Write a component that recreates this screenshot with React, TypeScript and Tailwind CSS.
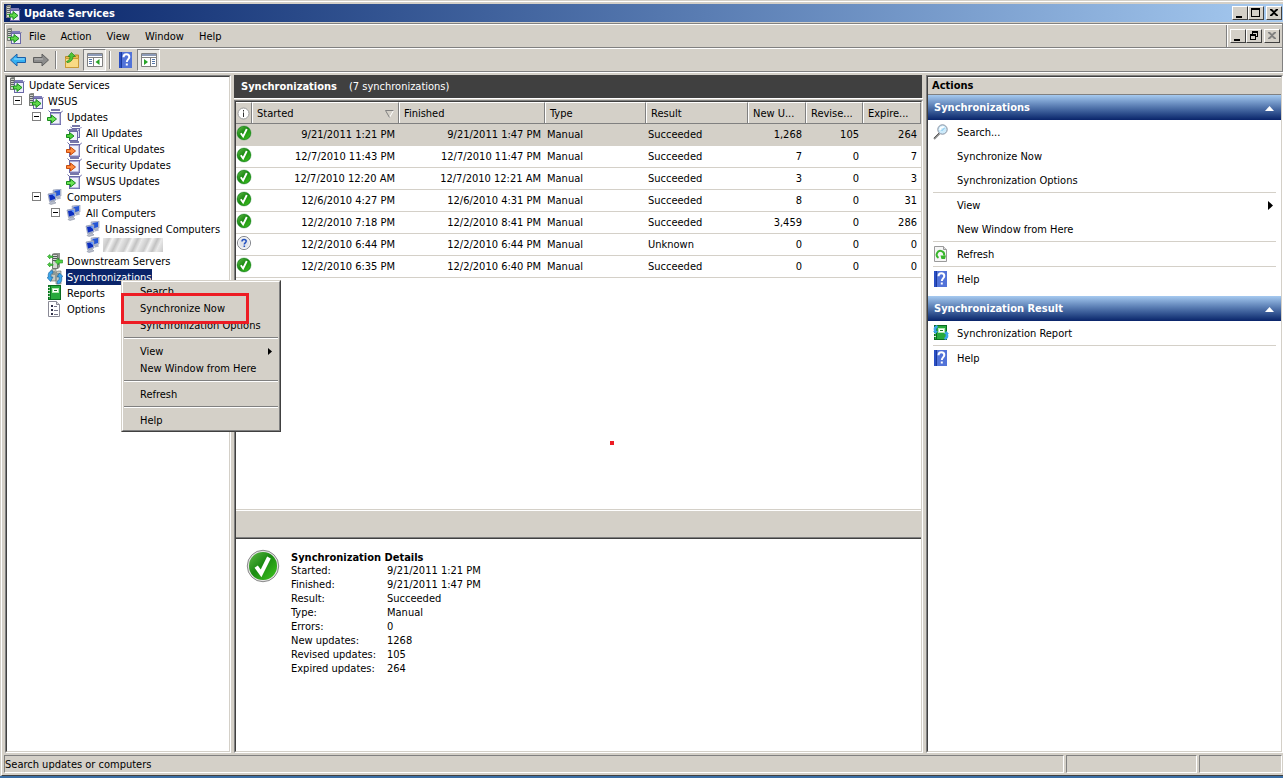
import clsx from "clsx";
import type { ReactNode } from "react";

const ARROW = "M0.5 8.500h4v-2.500l5 4-5 4v-2.500h-4z";

interface IconProps {
  children: ReactNode;
  size?: number;
}
const Icon = ({ children, size = 16 }: IconProps) => (
  <svg
    width={size}
    height={size}
    viewBox="0 0 16 16"
    className="block shrink-0"
    aria-hidden="true"
  >
    {children}
  </svg>
);

const ServerIcon = () => (
  <Icon>
    <path d="M1 1l2-1h3v13H1z" fill="#8d908b" />
    <path d="M1.500 1.500h4v11h-4z" fill="#d0d3cd" stroke="#777a76" />
    <path d="M2 3.500h3M2 5.500h3M2 7.500h3" stroke="#5b6064" />
    <rect x="2" y="9" width="2" height="1" fill="#3aa53a" />
    <path d="M4.500 4l1.500 1.500h8l1.500-1.500" fill="none" stroke="#6a69a8" />
    <rect x="6" y="3" width="8" height="2" fill="#7d7cb8" />
    <rect x="5.500" y="5.500" width="9" height="10" fill="#eeeefc" stroke="#6a69a8" />
    <path
      d="M4.500 9h3.500V6.500l5 4-5 4V12H4.500z"
      fill="#5fd84a"
      stroke="#188a1c"
    />
  </Icon>
);

const BoxIcon = ({ color = "green" }: { color?: "green" | "orange" }) => (
  <Icon>
    <rect x="4" y="0" width="9" height="2" fill="#7877a9" />
    <path d="M1.500 1.500L4 4h9.500l2.500-2.500" fill="none" stroke="#6a69a8" />
    <rect x="3.500" y="3.500" width="10" height="12" fill="#f1f1fb" stroke="#6a69a8" />
    <path d="M4 4.500h9" stroke="#a9a8d4" />
    <path d="M13 5v10H4" fill="none" stroke="#8f8ec2" />
    <path
      d={ARROW}
      fill={color === "green" ? "#6be254" : "#ff8a3c"}
      stroke={color === "green" ? "#188a1c" : "#c44a10"}
    />
  </Icon>
);

const StackIcon = () => (
  <Icon>
    <rect x="6" y="0" width="8" height="2" fill="#7877a9" />
    <path d="M4.500 2l2 1.500h7.500L15.500 2" fill="none" stroke="#6a69a8" />
    <rect x="6.500" y="3.500" width="7" height="9" fill="#dedef2" stroke="#6a69a8" />
    <path d="M1.500 4.500l2 2h8l1.500-2" fill="none" stroke="#6a69a8" />
    <rect x="3" y="4" width="8" height="2" fill="#7877a9" />
    <rect x="3.500" y="6.500" width="8" height="9" fill="#f1f1fb" stroke="#6a69a8" />
    <path
      d="M.5 9.500h3V7.500l4.500 3.500-4.500 3.500v-2h-3z"
      fill="#4ed03a"
      stroke="#188a1c"
    />
  </Icon>
);

const ComputersIcon = () => (
  <Icon>
    <path d="M6 1l8-1v7l-7 2z" fill="#b9c3dc" stroke="#8a93ad" strokeWidth=".6" />
    <path d="M7.500 2l5.500-1v5l-5 1.500z" fill="#2456d8" />
    <path d="M10 8l3-.5 1 2-4 1z" fill="#aab2c6" />
    <path d="M1 5l8-1.500V11l-6.500 1.500z" fill="#a9b6d8" stroke="#78839f" strokeWidth=".6" />
    <path d="M2 6l6-1v5l-5 1.500z" fill="#0d2fc0" />
    <path d="M5 5.500L8 5v3z" fill="#6ea4ff" />
    <path d="M4 12.500l3-.5 2 2-5 1.500-2-1z" fill="#b7bdcc" stroke="#7d8496" strokeWidth=".5" />
  </Icon>
);

const DownstreamIcon = () => (
  <Icon>
    <path d="M5 1l2-1h6v14l-2 2H5z" fill="#8f938e" />
    <path d="M5.500 1.500h5v14h-5z" fill="#d5d8d2" stroke="#737872" />
    <path d="M6 3.500h4M6 5.500h4M6 7.500h4" stroke="#50585a" />
    <path
      d="M.5 3.500l2.500-2v1.500h3v1.500H3V6zM.5 11.500l2.500-2V11h3v1.500H3V14zM8 8.500l3.500-3.500v2H15.500v3h-4v2z"
      fill="#55cf43"
      stroke="#1c8d22"
      strokeWidth=".6"
    />
  </Icon>
);

const SyncArrows = () => (
  <>
    <path
      d="M5.500 1.500C2 2 .5 5 1.500 8L0 8.500l3.500 4L6 8l-2 .2C3.500 6 4 4.500 6 4z"
      fill="#3aa5ea"
      stroke="#16609c"
      strokeWidth=".6"
    />
    <path
      d="M10.500 15c3.500-.5 5-3.500 4-7l1.500-.5L12.500 4 10 8l2-.2c.5 2.200 0 3.900-2 4.500z"
      fill="#3aa5ea"
      stroke="#16609c"
      strokeWidth=".6"
    />
  </>
);

const SyncIcon = () => (
  <Icon>
    <path d="M4 1l2-1h3v12H4zM9 3l2-1h3v13H9z" fill="#c5cac3" stroke="#656b66" strokeWidth=".6" />
    <path d="M5 3h3M5 5h3M10 5h3M10 7h3" stroke="#566" />
    <SyncArrows />
  </Icon>
);

const ReportIcon = ({ sync = false }: { sync?: boolean }) => (
  <Icon>
    <rect x="1.500" y=".5" width="12" height="14" fill="#27a93c" stroke="#0b6b20" />
    <path d="M1 2.500h2M1 5.500h2M1 8.500h2M1 11.500h2" stroke="#d8e8d8" />
    <path d="M3.500 1v13" stroke="#0b6b20" />
    <rect x="5.500" y="3.500" width="6" height="4" fill="#fff" stroke="#b0e8b0" />
    <rect x="7" y="5" width="3" height="1" fill="#1c7c2c" />
    {sync && (
      <>
        <path d="M4 0C1 1 0 3 1 6H0l2.500 3L5 6H3.500C3 4 3.500 3 5 2z" fill="#3aa5ea" />
        <path d="M12 15c3-1 4-3 3-6h1l-2.500-3L11 9h1.500c.5 2 0 3-1.500 4z" fill="#3aa5ea" />
      </>
    )}
  </Icon>
);

const OptionsIcon = () => (
  <Icon>
    <path d="M1.500.5h8l3 3v12h-11z" fill="#fff" stroke="#8a8a96" />
    <path d="M9.500.5v3h3" fill="#ddd" stroke="#8a8a96" />
    <path d="M4 5h2M4 9h2M4 13h2" stroke="#33334a" strokeWidth="2" />
    <path d="M7 5.500h3M7 9.500h4M7 13.500h4" stroke="#77778a" />
  </Icon>
);

const HelpIcon = () => (
  <Icon>
    <path d="M1 0h13v16H1z" fill="#2a4fc4" />
    <path d="M4 0h10v16H4z" fill="#5273d8" />
    <path d="M3 0h1v16H3z" fill="#1c3a9c" />
    <path
      d="M5.500 5.200C5.500 3 6.700 2.300 8.400 2.300c1.800 0 2.900 1 2.900 2.700 0 2.300-2.500 2.500-2.500 5M8.800 11.500v2"
      fill="none"
      stroke="#fff"
      strokeWidth="2"
    />
  </Icon>
);

const RefreshIcon = () => (
  <Icon>
    <path d="M1.500.5h9l3 3v12h-12z" fill="#f6f6f6" stroke="#9a9a9a" />
    <path d="M10.500.5v3h3" fill="#ddd" stroke="#9a9a9a" />
    <path
      d="M5.500 11.800A3.700 3.700 0 1 1 11 9.500"
      fill="none"
      stroke="#38b52c"
      strokeWidth="2"
    />
    <path d="M7.500 9.500h5.500l-1 3.500h-3.500z" fill="#38b52c" />
  </Icon>
);

const SearchIcon = () => (
  <Icon>
    <path d="M1 15l5.500-5.500" stroke="#8c8c8c" strokeWidth="2" />
    <path d="M1 14l5-5" stroke="#444" strokeWidth=".7" />
    <circle cx="9.500" cy="5.500" r="4.700" fill="#cdeafa" stroke="#8790a0" />
    <path d="M7 6c0-2 1.500-3.500 4-3" fill="none" stroke="#fff" strokeWidth="1.500" />
    <path d="M8.500 7l3-3" stroke="#7cc4ec" />
  </Icon>
);

const OkIcon = ({ big = false }: { big?: boolean }) => (
  <Icon size={big ? 34 : 16}>
    <defs>
      <linearGradient id="ok" x1="0" y1="0" x2="1" y2="1">
        <stop offset="0" stopColor="#63bb4a" />
        <stop offset=".45" stopColor="#1b8a12" />
        <stop offset="1" stopColor="#3fc51f" />
      </linearGradient>
    </defs>
    <circle cx="8" cy="8" r={big ? 7.400 : 7.100} fill={big ? "#e4e4e4" : "#12801a"} stroke={big ? "#777" : "#4d9c4d"} strokeWidth=".4" />
    <circle cx="8" cy="8" r={big ? 6.600 : 6.500} fill="url(#ok)" />
    <path d="M4.800 8.300l2.300 3.200L10.800 4" fill="none" stroke="#fff" strokeWidth="1.900" />
  </Icon>
);

const UnknownIcon = () => (
  <Icon>
    <circle cx="8" cy="8" r="6.500" fill="#e1e4ea" stroke="#7c7f86" />
    <circle cx="8" cy="8" r="5.500" fill="none" stroke="#fff" strokeWidth=".8" />
    <path
      d="M6 6.500C6 5 7 4.400 8.100 4.400c1.300 0 2.100.8 2.100 1.900 0 1.500-1.900 1.700-1.900 3.200M8.300 10.500v1.500"
      fill="none"
      stroke="#2351c0"
      strokeWidth="1.500"
    />
  </Icon>
);

const NavArrow = ({ forward = false }: { forward?: boolean }) => (
  <Icon>
    <path
      d={forward ? "M15.500 8L9 2v3.500H.5v5H9V14z" : "M.5 8L7 2v3.500h8.500v5H7V14z"}
      fill={forward ? "#8c8c8c" : "#35b0f2"}
      stroke={forward ? "#5e5e5e" : "#1c5fa8"}
    />
    <path d={forward ? "M1.500 7h8.500" : "M4 7h10.500"} stroke={forward ? "#bcbcbc" : "#9ee0ff"} />
  </Icon>
);

const FolderIcon = () => (
  <Icon>
    <path d="M1.500 4.500h8l1-1.500h4v12.500h-13z" fill="#e9b94c" stroke="#b98a28" />
    <path d="M1.500 6.500h13v9h-13z" fill="#f9da84" stroke="#c99a38" />
    <path
      d="M2.500 9.500C5 8.500 6 7 6 4.500H4L7.500.5l4 4H9c0 3.500-2.500 6-6 6z"
      fill="#4fc63a"
      stroke="#22841c"
      strokeWidth=".7"
    />
  </Icon>
);

const PaneIcon = ({ right = false }: { right?: boolean }) => (
  <Icon>
    <path d="M.5 1.500h15v13H.5z" fill="#fff" stroke="#808080" />
    <path d="M1 2h14v2H1z" fill="#8d9bb8" />
    <path d="M1 5.500h14" stroke="#808080" />
    <path d={right ? "M9.500 6v8" : "M6.500 6v8"} stroke="#808080" />
    <path
      d={right ? "M11 7.500h3M11 9.500h3M11 11.500h3" : "M2 7.500h3M2 9.500h3M2 11.500h3"}
      stroke="#5878a8"
    />
    <path d={right ? "M3 7v6l4-3z" : "M12.500 7v6l-4-3z"} fill="#28a428" />
  </Icon>
);

const glyphs = {
  minimize: <path d="M3 9h6v2H3z" />,
  maximize: <path d="M2 1h9v9H2zM3 3v6h7V3z" fillRule="evenodd" />,
  restore: (
    <path d="M5 1h6v6H9v3H3V4h2zM6 3v1h3v2h1V3zM4 6v3h4V6z" fillRule="evenodd" />
  ),
  close: <path d="M3 2h2l2 2 2-2h2v1L8 5.500 11 8v1H9L7 7 5 9H3V8l3-2.500L3 3z" />,
};

interface CaptionButtonProps {
  kind: keyof typeof glyphs;
  label: string;
  disabled?: boolean;
}
const CaptionButton = ({ kind, label, disabled }: CaptionButtonProps) => (
  <button
    aria-label={label}
    disabled={disabled}
    className={clsx(
      "h-[14px] w-4 border border-t-white border-r-[#404040] border-b-[#404040] border-l-white bg-[#d4d0c8]",
      disabled && "text-[#808080]",
    )}
  >
    <svg width="14" height="12" viewBox="0 0 14 12" fill="currentColor" aria-hidden="true">
      {glyphs[kind]}
    </svg>
  </button>
);

interface Node {
  label: string;
  icon: ReactNode;
  selected?: boolean;
  redacted?: boolean;
  children?: Node[];
}

const tree: Node = {
  label: "Update Services",
  icon: <ServerIcon />,
  children: [
    {
      label: "WSUS",
      icon: <ServerIcon />,
      children: [
        {
          label: "Updates",
          icon: <BoxIcon />,
          children: [
            { label: "All Updates", icon: <StackIcon /> },
            { label: "Critical Updates", icon: <BoxIcon color="orange" /> },
            { label: "Security Updates", icon: <BoxIcon color="orange" /> },
            { label: "WSUS Updates", icon: <BoxIcon /> },
          ],
        },
        {
          label: "Computers",
          icon: <ComputersIcon />,
          children: [
            {
              label: "All Computers",
              icon: <ComputersIcon />,
              children: [
                { label: "Unassigned Computers", icon: <ComputersIcon /> },
                { label: "", icon: <ComputersIcon />, redacted: true },
              ],
            },
          ],
        },
        { label: "Downstream Servers", icon: <DownstreamIcon /> },
        { label: "Synchronizations", icon: <SyncIcon />, selected: true },
        { label: "Reports", icon: <ReportIcon /> },
        { label: "Options", icon: <OptionsIcon /> },
      ],
    },
  ],
};

const TreeNode = ({ node, root = false }: { node: Node; root?: boolean }) => (
  <li>
    <div className="flex h-4 items-center">
      {!root && (
        <span className="flex h-4 w-[19px] shrink-0 items-start pt-[3px] pl-1">
          {node.children && (
            <button
              aria-label={"Collapse " + node.label}
              className="flex size-[9px] items-center justify-center border border-[#808080]"
            >
              <span className="h-px w-[5px] bg-black" />
            </button>
          )}
        </span>
      )}
      {node.icon}
      {node.redacted ? (
        <span className="ml-[2px] h-[14px] w-[60px] bg-[repeating-linear-gradient(115deg,#e8e8e8_0px,#c9c9c9_6px,#f4f4f4_9px,#c2c2c2_14px,#ececec_18px)]" />
      ) : (
        <span
          className={clsx(
            "ml-[3px] h-4 px-px pt-px leading-4 whitespace-nowrap",
            node.selected && "bg-[#0a246a] text-white",
          )}
        >
          {node.label}
        </span>
      )}
    </div>
    {node.children && (
      <ul className={clsx(!root && "pl-[19px]")}>
        {node.children.map((child, i) => (
          <TreeNode key={i} node={child} />
        ))}
      </ul>
    )}
  </li>
);

const rows = [
  ["9/21/2011 1:21 PM", "9/21/2011 1:47 PM", "Succeeded", "1,268", "105", "264"],
  ["12/7/2010 11:43 PM", "12/7/2010 11:47 PM", "Succeeded", "7", "0", "7"],
  ["12/7/2010 12:20 AM", "12/7/2010 12:21 AM", "Succeeded", "3", "0", "3"],
  ["12/6/2010 4:27 PM", "12/6/2010 4:31 PM", "Succeeded", "8", "0", "31"],
  ["12/2/2010 7:18 PM", "12/2/2010 8:41 PM", "Succeeded", "3,459", "0", "286"],
  ["12/2/2010 6:44 PM", "12/2/2010 6:44 PM", "Unknown", "0", "0", "0"],
  ["12/2/2010 6:35 PM", "12/2/2010 6:40 PM", "Succeeded", "0", "0", "0"],
];

const HeaderCell = ({ children }: { children: ReactNode }) => (
  <th className="h-[22px] border-t border-r border-b border-t-white border-r-[#808080] border-b-[#808080] bg-[#d4d0c8] p-0 text-left font-normal">
    <div className="flex h-5 items-center border-l border-white pt-px pl-1 whitespace-nowrap">
      {children}
    </div>
  </th>
);

const SyncTable = () => (
  <table className="w-full table-fixed border-separate border-spacing-0">
    <colgroup>
      <col className="w-4" />
      <col className="w-[147px]" />
      <col className="w-[146px]" />
      <col className="w-[101px]" />
      <col className="w-[102px]" />
      <col className="w-[58px]" />
      <col className="w-[57px]" />
      <col className="w-[58px]" />
    </colgroup>
    <thead>
      <tr>
        <th className="h-[22px] border-t border-r border-b border-t-white border-r-[#808080] border-b-[#808080] bg-[#d4d0c8] p-0">
          <svg width="15" height="15" viewBox="0 0 15 15" role="img" aria-label="Status">
            <circle cx="7.500" cy="7.500" r="5.500" fill="#fff" stroke="#999" />
            <path d="M7.500 4v1.500M7.500 6.500V11" stroke="#333" />
          </svg>
        </th>
        <HeaderCell>
          <span className="flex-1">Started</span>
          <svg width="9" height="8" viewBox="0 0 9 8" className="mr-1" aria-hidden="true">
            <path d="M8.500.5l-4 7" stroke="#fff" />
            <path d="M8.500.5h-8l4 7" fill="none" stroke="#808080" />
          </svg>
        </HeaderCell>
        <HeaderCell>Finished</HeaderCell>
        <HeaderCell>Type</HeaderCell>
        <HeaderCell>Result</HeaderCell>
        <HeaderCell>New U...</HeaderCell>
        <HeaderCell>Revise...</HeaderCell>
        <HeaderCell>Expire...</HeaderCell>
      </tr>
    </thead>
    <tbody>
      {rows.map(([started, finished, result, added, revised, expired], i) => (
        <tr
          key={started}
          className={clsx(
            "[&>td]:h-[22px] [&>td]:border-b [&>td]:border-[#d4d0c8] [&>td]:pt-px [&>td]:pb-0 [&>td]:whitespace-nowrap",
            i === 0 && "bg-[#d4d0c8]",
          )}
        >
          <td className="p-0 align-top">
            {result === "Unknown" ? <UnknownIcon /> : <OkIcon />}
          </td>
          <td className="pr-1 text-right">{started}</td>
          <td className="pr-1 text-right">{finished}</td>
          <td className="pl-[2px]">Manual</td>
          <td className="pl-[2px]">{result}</td>
          <td className="pr-1 text-right">{added}</td>
          <td className="pr-1 text-right">{revised}</td>
          <td className="pr-1 text-right">{expired}</td>
        </tr>
      ))}
    </tbody>
  </table>
);

const details = [
  ["Started:", "9/21/2011 1:21 PM"],
  ["Finished:", "9/21/2011 1:47 PM"],
  ["Result:", "Succeeded"],
  ["Type:", "Manual"],
  ["Errors:", "0"],
  ["New updates:", "1268"],
  ["Revised updates:", "105"],
  ["Expired updates:", "264"],
];

const ActionHeader = ({ children }: { children: ReactNode }) => (
  <h3 className="flex h-[25px] items-center justify-between bg-linear-to-b from-[#a6caf0] to-[#0a246a] pt-px pr-[7px] pl-[6px] font-bold text-white">
    {children}
    <svg width="9" height="5" viewBox="0 0 9 5" fill="#fff" aria-hidden="true">
      <path d="M4.500 0L9 5H0z" />
    </svg>
  </h3>
);

interface ActionItemProps {
  children: ReactNode;
  icon?: ReactNode;
  submenu?: boolean;
}
const ActionItem = ({ children, icon, submenu }: ActionItemProps) => (
  <button className="flex h-6 w-full items-center pr-2 pl-[5px] text-left">
    <span className="w-6">{icon}</span>
    <span className="flex-1 pt-[2px]">{children}</span>
    {submenu && <SubmenuArrow />}
  </button>
);

const SubmenuArrow = () => (
  <svg width="5" height="9" viewBox="0 0 5 9" aria-hidden="true">
    <path d="M0 0v9l5-4.500z" />
  </svg>
);

const ActionRule = () => <hr className="mx-[5px] border-[#d4d0c8]" />;

const MenuItem = ({ children, submenu }: ActionItemProps) => (
  <button
    role="menuitem"
    className="flex h-[17px] w-full items-center justify-between pr-[6px] pl-4 text-left"
  >
    {children}
    {submenu && (
      <svg width="4" height="7" viewBox="0 0 4 7" aria-hidden="true">
        <path d="M0 0v7l4-3.500z" />
      </svg>
    )}
  </button>
);

const MenuRule = () => (
  <div role="separator" className="pt-[3px] pb-1">
    <div className="h-[2px] border-t border-[#808080] bg-white" />
  </div>
);

const ContextMenu = () => (
  <div
    role="menu"
    className="absolute top-[280px] left-[121px] w-40 border border-t-[#d4d0c8] border-r-[#404040] border-b-[#404040] border-l-[#d4d0c8] bg-[#d4d0c8]"
  >
    <div className="border border-t-white border-r-[#808080] border-b-[#808080] border-l-white p-px">
      <MenuItem>Search...</MenuItem>
      <MenuItem>Synchronize Now</MenuItem>
      <MenuItem>Synchronization Options</MenuItem>
      <MenuRule />
      <MenuItem submenu>View</MenuItem>
      <MenuItem>New Window from Here</MenuItem>
      <MenuRule />
      <MenuItem>Refresh</MenuItem>
      <MenuRule />
      <MenuItem>Help</MenuItem>
    </div>
    <div className="pointer-events-none absolute top-3 -left-px h-[31px] w-32 border-3 border-[#ed1c24]" />
  </div>
);

const ToolSeparator = () => (
  <span className="mx-[3px] h-[18px] w-[2px] border-l border-[#808080] bg-white" />
);

const toolButton = "flex h-[22px] w-[23px] items-center justify-center";
const pressedButton =
  "border border-t-[#808080] border-r-white border-b-white border-l-[#808080] bg-[#eae8e4]";

const sunken = "border border-t-[#808080] border-r-white border-b-white border-l-[#808080]";
const sunkenInner = "border border-t-[#404040] border-r-[#d4d0c8] border-b-[#d4d0c8] border-l-[#404040]";

export default function App() {
  return (
    <div className="relative flex h-screen flex-col overflow-hidden border-b-2 border-[#3a6ea5] bg-[#d4d0c8] pt-px pl-px font-['DejaVu_Sans_Condensed','DejaVu_Sans',sans-serif] text-[11px] leading-[14px] text-black">
      <div className="flex min-h-0 flex-1 flex-col border-t border-b border-l border-t-white border-b-[#404040] border-l-white pt-[2px] pl-[2px]">
        <header className="flex h-[18px] shrink-0 items-center bg-linear-to-r from-[#0a246a] to-[#a6caf0] pr-px pl-px">
          <ServerIcon />
          <h1 className="ml-[3px] flex-1 pt-px font-bold text-white">Update Services</h1>
          <CaptionButton kind="minimize" label="Minimize" />
          <CaptionButton kind="maximize" label="Maximize" />
          <span className="w-[2px]" />
          <CaptionButton kind="close" label="Close" />
        </header>

        <div className="mt-px shrink-0 border border-[#808080]">
          <nav className="flex h-[24px] items-stretch border-t border-b border-l border-t-white border-b-[#808080] border-l-white">
            <div className="flex flex-1 items-center border-r border-[#808080]">
              <ServerIcon />
              <div className="ml-[7px] flex gap-[15px] pt-px">
                <button>File</button>
                <button>Action</button>
                <button>View</button>
                <button>Window</button>
                <button>Help</button>
              </div>
            </div>
            <div className="flex items-center border-l border-white pr-[2px] pl-[2px]">
              <CaptionButton kind="minimize" label="Minimize child window" />
              <CaptionButton kind="restore" label="Restore child window" />
              <span className="w-[2px]" />
              <CaptionButton kind="close" label="Close child window" disabled />
            </div>
          </nav>
          <div className="flex h-[23px] items-center border-t border-l border-white">
            <button aria-label="Back" className={toolButton}>
              <NavArrow />
            </button>
            <button aria-label="Forward" className={toolButton}>
              <NavArrow forward />
            </button>
            <ToolSeparator />
            <button aria-label="Up one level" className={toolButton}>
              <FolderIcon />
            </button>
            <button aria-label="Show console tree" className={clsx(toolButton, pressedButton)}>
              <PaneIcon />
            </button>
            <ToolSeparator />
            <button aria-label="Help" className={toolButton}>
              <HelpIcon />
            </button>
            <button aria-label="Show action pane" className={clsx(toolButton, pressedButton)}>
              <PaneIcon right />
            </button>
          </div>
        </div>

        <div className="flex min-h-0 flex-1 gap-[3px] border-t border-white pt-[2px] pl-px">
          <aside className={clsx("w-[226px] shrink-0", sunken)}>
            <div className={clsx("h-full bg-white pl-[2px]", sunkenInner)}>
              <ul>
                <TreeNode node={tree} root />
              </ul>
            </div>
          </aside>

          <main className="flex min-w-0 flex-1 flex-col">
            <div className="mr-px flex h-[23px] shrink-0 items-center bg-[#404040] pt-px pl-[7px] text-white">
              <h2 className="font-bold">Synchronizations</h2>
              <span className="ml-3">(7 synchronizations)</span>
            </div>
            <div className="h-[2px] shrink-0 border-t border-white" />
            <div className={clsx("flex min-h-0 flex-1 flex-col", sunken)}>
              <div className={clsx("flex min-h-0 flex-1 flex-col bg-white", sunkenInner)}>
                <div className="relative min-h-0 flex-1">
                  <SyncTable />
                  <span className="absolute top-[339px] left-[374px] size-1 bg-[#ed1c24]" />
                </div>
                <div className="h-[30px] shrink-0 border-t border-b border-t-[#d4d0c8] border-b-[#404040]">
                  <div className="h-full border-t border-b border-t-white border-b-[#808080] bg-[#d4d0c8]" />
                </div>
                <section className="flex h-[212px] shrink-0 pt-[10px] pl-[10px]">
                  <OkIcon big />
                  <div className="ml-[11px] pt-[2px]">
                    <h3 className="leading-[13px] font-bold">Synchronization Details</h3>
                    <dl className="grid grid-cols-[96px_auto]">
                      {details.map(([term, value]) => (
                        <div key={term} className="contents">
                          <dt>{term}</dt>
                          <dd>{value}</dd>
                        </div>
                      ))}
                    </dl>
                  </div>
                </section>
              </div>
            </div>
          </main>

          <aside className={clsx("w-[357px] shrink-0", sunken)}>
            <div className={clsx("h-full bg-white", sunkenInner)}>
              <h2 className="h-[18px] border-t border-b border-t-white border-b-[#808080] bg-[#d4d0c8] pl-1 leading-4 font-bold">
                Actions
              </h2>
              <ActionHeader>Synchronizations</ActionHeader>
              <ActionItem icon={<SearchIcon />}>Search...</ActionItem>
              <ActionItem>Synchronize Now</ActionItem>
              <ActionItem>Synchronization Options</ActionItem>
              <ActionRule />
              <ActionItem submenu>View</ActionItem>
              <ActionItem>New Window from Here</ActionItem>
              <ActionRule />
              <ActionItem icon={<RefreshIcon />}>Refresh</ActionItem>
              <ActionRule />
              <ActionItem icon={<HelpIcon />}>Help</ActionItem>
              <div className="h-[5px]" />
              <ActionHeader>Synchronization Result</ActionHeader>
              <ActionItem icon={<ReportIcon sync />}>Synchronization Report</ActionItem>
              <ActionRule />
              <ActionItem icon={<HelpIcon />}>Help</ActionItem>
            </div>
          </aside>
        </div>

        <footer className="mt-[2px] mb-[2px] flex h-[18px] shrink-0 gap-[2px] pr-px">
          <div className={clsx("flex flex-1 items-center pt-px", sunken)}>
            Search updates or computers
          </div>
          <div className={clsx("w-[131px]", sunken)} />
          <div className={clsx("w-[83px]", sunken)} />
        </footer>
      </div>
      <ContextMenu />
    </div>
  );
}
